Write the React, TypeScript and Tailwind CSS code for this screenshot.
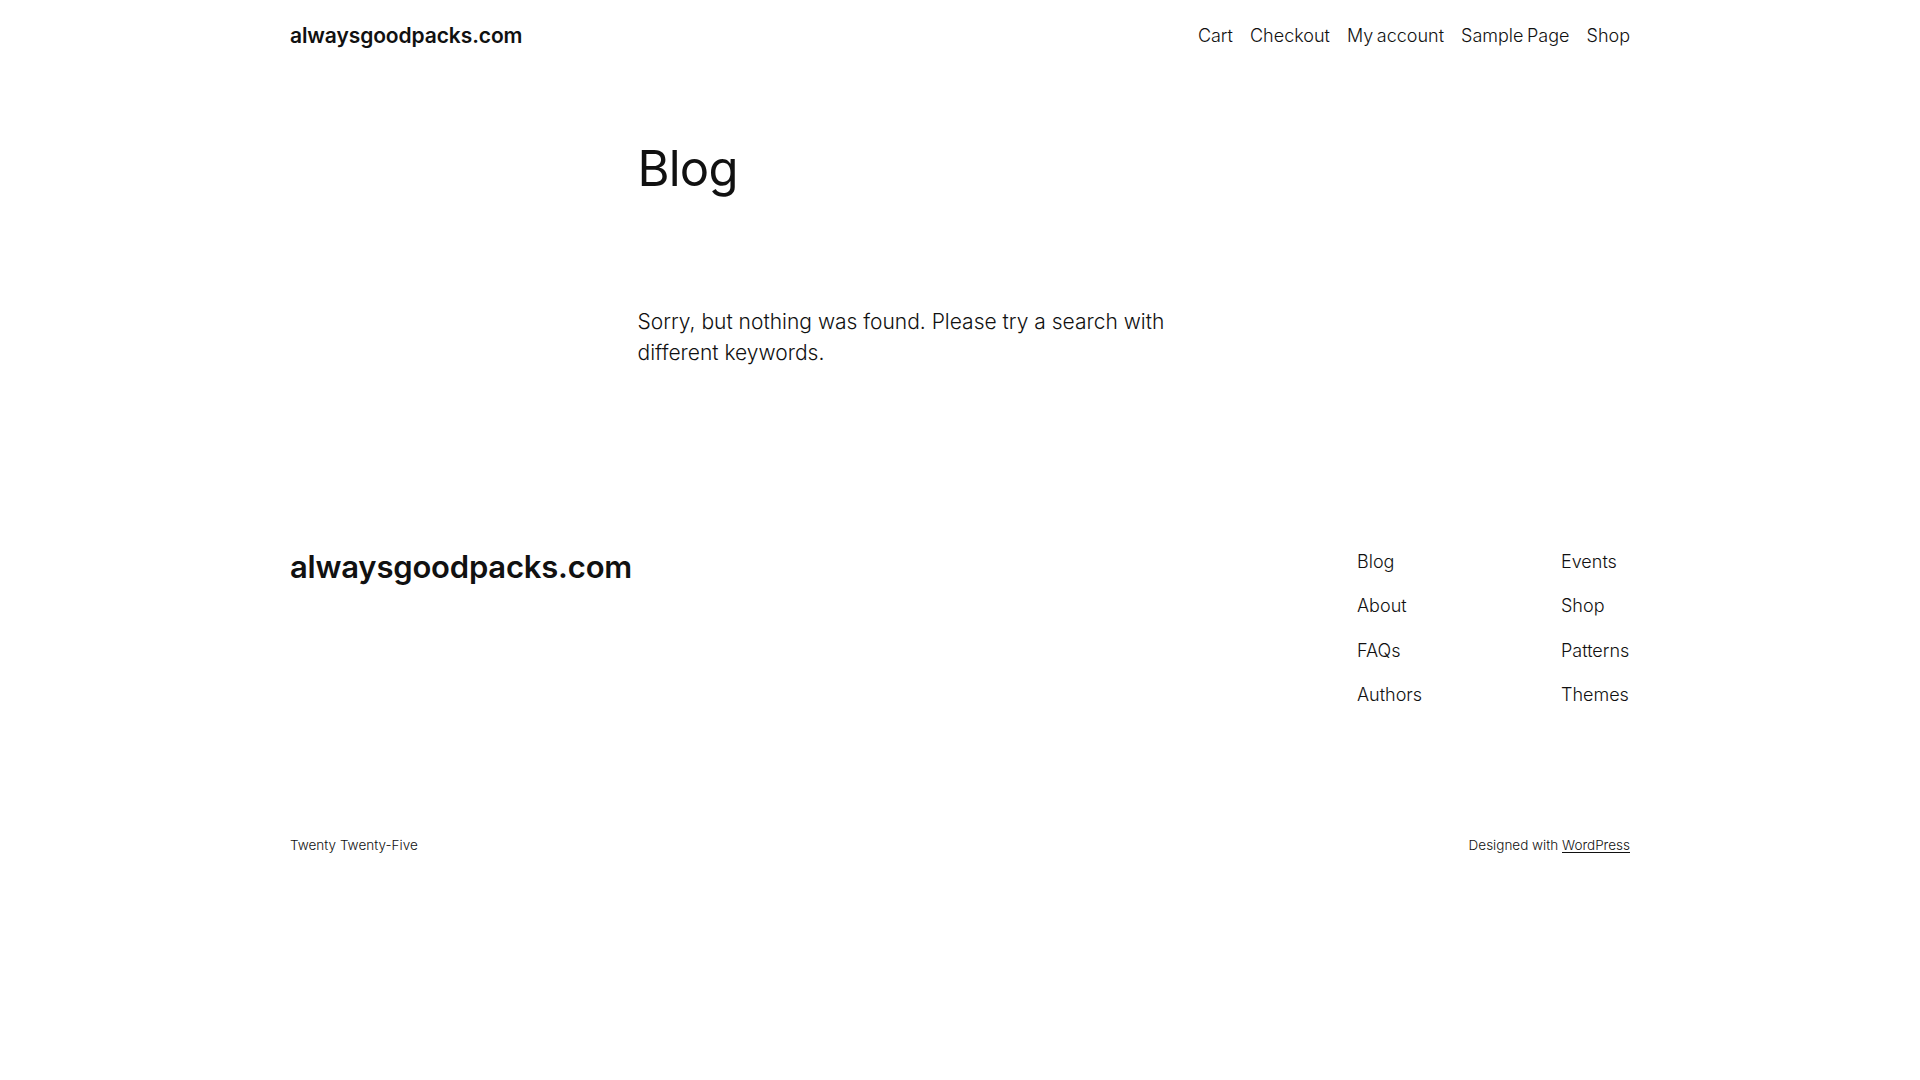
const headerLinks = ["Cart", "Checkout", "My account", "Sample Page", "Shop"];
const footerColOne = ["Blog", "About", "FAQs", "Authors"];
const footerColTwo = ["Events", "Shop", "Patterns", "Themes"];

export default function App() {
  return (
    <div className="min-h-screen bg-white text-[#111111] font-['Inter','Liberation_Sans',sans-serif]">
      <div className="mx-auto w-[1340px]">
        {/* header */}
        <header className="flex h-[71px] items-center justify-between">
          <a href="#" className="text-[21px] font-semibold tracking-[-0.1px]">
            alwaysgoodpacks.com
          </a>
          <nav className="flex items-center gap-[17px] text-[18px] font-light [word-spacing:-1.5px]">
            {headerLinks.map((label) => (
              <a key={label} href="#">
                {label}
              </a>
            ))}
          </nav>
        </header>

        {/* main */}
        <main className="mx-auto w-[645px] pt-[69px]">
          <h1 className="text-[49px] leading-[1.2] font-normal tracking-[-0.8px]">Blog</h1>
          <p className="mt-[107px] max-w-[600px] text-[21px] leading-[31px] font-light">
            Sorry, but nothing was found. Please try a search with different keywords.
          </p>
        </main>

        {/* footer */}
        <footer className="mt-[180px]">
          <div className="flex items-start justify-between">
            <a href="#" className="text-[31px] leading-[1.2] font-semibold tracking-[-0.2px]">
              alwaysgoodpacks.com
            </a>
            <div className="flex">
              <ul className="flex w-[204px] flex-col gap-[17.5px] text-[18px] leading-[27px] font-light">
                {footerColOne.map((label) => (
                  <li key={label}>
                    <a href="#">{label}</a>
                  </li>
                ))}
              </ul>
              <ul className="flex w-[69px] flex-col gap-[17.5px] text-[18px] leading-[27px] font-light">
                {footerColTwo.map((label) => (
                  <li key={label}>
                    <a href="#">{label}</a>
                  </li>
                ))}
              </ul>
            </div>
          </div>

          <div className="mt-[127px] flex items-center justify-between text-[13.5px] leading-5 font-light">
            <p>Twenty Twenty-Five</p>
            <p>
              Designed with{" "}
              <a href="#" className="underline underline-offset-2">
                WordPress
              </a>
            </p>
          </div>
        </footer>
      </div>
    </div>
  );
}
